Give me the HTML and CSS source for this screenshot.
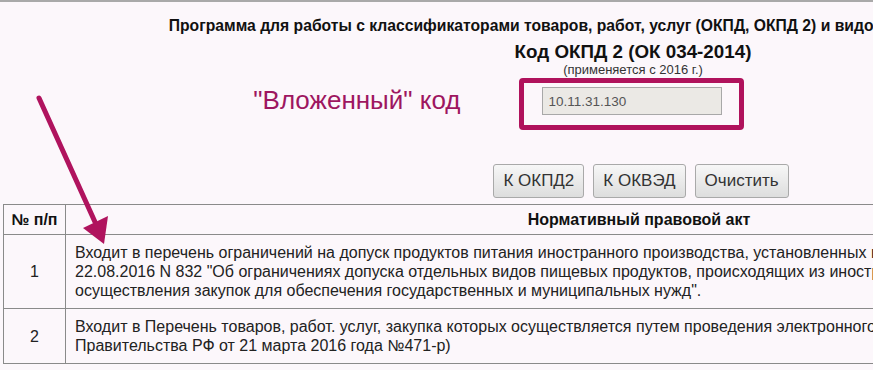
FILE: index.html
```html
<!DOCTYPE html>
<html lang="ru">
<head>
  <meta charset="UTF-8">
  <title>Классификаторы ОКПД 2</title>
  <link rel="stylesheet" href="styles.css">
</head>
<body>

  <div class="page">
    <h2 class="title">Программа для работы с классификаторами товаров, работ, услуг (ОКПД, ОКПД 2) и видов деятельности (ОКВЭД 2)</h2>

    <h1 class="code-title">Код ОКПД 2 (ОК 034-2014)</h1>
    <p class="since">(применяется с 2016 г.)</p>

    <div class="code-row">
      <div class="marked">
        <span class="note">"Вложенный" код</span>
        <input class="code-input" type="text" value="10.11.31.130" readonly>
      </div>
    </div>

    <div class="actions">
      <button class="btn">К ОКПД2</button>
      <button class="btn">К ОКВЭД</button>
      <button class="btn">Очистить</button>
    </div>

    <table class="acts">
      <tr>
        <th class="num">№ п/п</th>
        <th>Нормативный правовой акт</th>
      </tr>
      <tr>
        <td class="num">1</td>
        <td>Входит в перечень ограничений на допуск продуктов питания иностранного производства, установленных постановлением Правительства РФ от<br>22.08.2016 N 832 "Об ограничениях допуска отдельных видов пищевых продуктов, происходящих из иностранных государств, для целей<br>осуществления закупок для обеспечения государственных и муниципальных нужд".</td>
      </tr>
      <tr>
        <td class="num">2</td>
        <td>Входит в Перечень товаров, работ. услуг, закупка которых осуществляется путем проведения электронного аукциона (распоряжение<br>Правительства РФ от 21 марта 2016 года №471-р)</td>
      </tr>
    </table>

    <!-- стрелка-пометка поверх таблицы -->
    <svg class="arrow" width="120" height="250" viewBox="0 0 120 250">
      <line x1="39" y1="96" x2="95" y2="220" stroke="#b0135e" stroke-width="5" stroke-linecap="round"/>
      <polygon points="104,242 83,226 108,214" fill="#b0135e"/>
    </svg>
  </div>

</body>
</html>
```

FILE: styles.css
```css
html, body {
  overflow: hidden;
}

body {
  margin: 0;
  background-color: #fcf7fb;
  border-top: 2px solid #a9a9a9;
  font-family: "Liberation Sans", Arial, sans-serif;
  color: #222;
}

.page {
  position: relative;
  width: 1260px;
  margin-left: 3px;
  text-align: center;
}

.title {
  margin: 0;
  padding-top: 15px;
  padding-right: 18px;
  font-size: 15.7px;
  line-height: 18px;
  color: #111;
  white-space: nowrap;
}

.code-title {
  margin: 6px 0 0;
  font-size: 18.8px;
  line-height: 22px;
  color: #111;
}

.since {
  margin: 0;
  font-size: 13px;
  line-height: 14px;
  color: #333;
}

.code-row {
  display: flex;
  justify-content: center;
  padding-top: 1px;
}

.marked {
  position: relative;
  display: flex;
  padding: 4px 17px 10px 18px;
  border: 5px solid #b0125c;
  border-radius: 4px;
  margin-left: -4px;
}

.note {
  position: absolute;
  right: 100%;
  top: 2px;
  margin-right: 63px;
  font-size: 26px;
  white-space: nowrap;
  color: #9e1660;
}

.code-input {
  width: 180px;
  height: 28px;
  box-sizing: border-box;
  padding: 0 6px;
  border: 1px solid #a8a8a8;
  background-color: #ebe9e5;
  font-family: "Liberation Sans", Arial, sans-serif;
  font-size: 13.5px;
  color: #555;
}

.actions {
  display: flex;
  justify-content: center;
  gap: 9px;
  margin: 34px 0 6px;
  padding-left: 16px;
}

.btn {
  height: 34px;
  padding: 0 9px;
  border: 1px solid #a9a9a9;
  border-radius: 3px;
  background: linear-gradient(#f7f7f7, #dddddd);
  font-family: "Liberation Sans", Arial, sans-serif;
  font-size: 17px;
  color: #333;
  cursor: pointer;
}

.acts {
  width: 1210px;
  border-collapse: collapse;
  text-align: left;
}

.acts th,
.acts td {
  border: 1px solid #8a8a8a;
  padding: 8px 9px;
  font-size: 16px;
  line-height: 19px;
}

.acts th {
  padding: 5px 9px;
  text-align: center;
  white-space: nowrap;
  color: #111;
}

.acts .num {
  width: 61px;
  padding-left: 0;
  padding-right: 0;
  text-align: center;
}

.arrow {
  position: absolute;
  left: -3px;
  top: 0;
}
```
